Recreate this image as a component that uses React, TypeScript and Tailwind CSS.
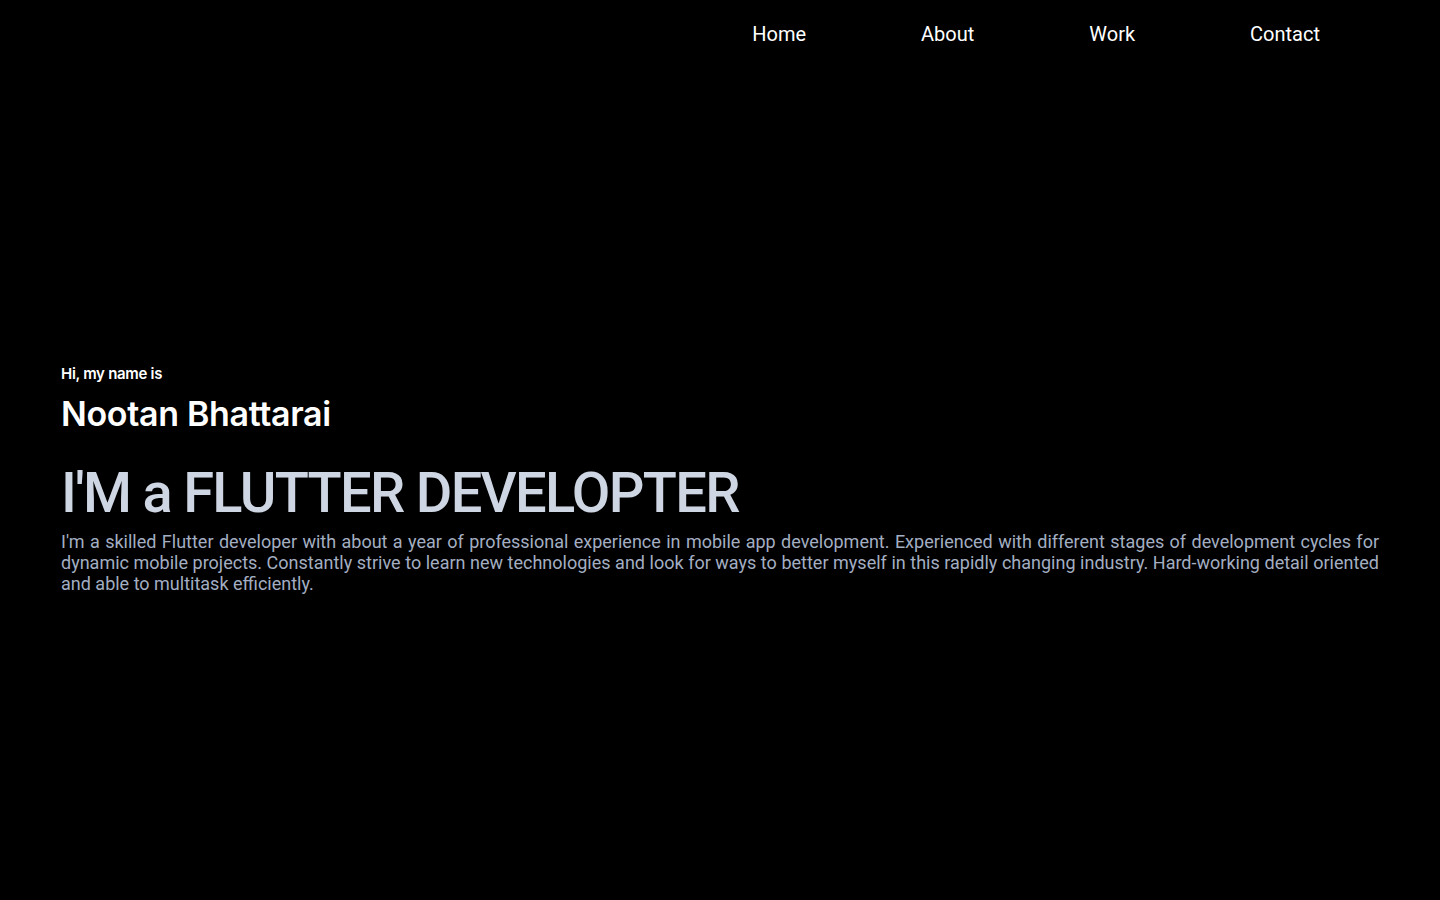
const NAV = ["Home", "About", "Work", "Contact"]

export default function App() {
  return (
    <div className="min-h-screen w-full bg-black text-white">
      <nav className="flex h-[68px] items-center justify-end gap-[115px] pr-[120px] font-['Roboto',sans-serif] text-[20px]">
        {NAV.map((item) => (
          <a key={item} href="#" className="text-white">
            {item}
          </a>
        ))}
      </nav>

      <section className="px-[61px] pt-[296px]">
        <p className="font-['Inter',sans-serif] text-[15px] leading-[20px] font-semibold tracking-[-0.02em]">
          Hi, my name is
        </p>
        <h1 className="mt-[10px] font-['Inter',sans-serif] text-[34px] leading-[40px] font-semibold tracking-[-0.01em]">
          Nootan Bhattarai
        </h1>
        <h2 className="mt-[29px] font-['Roboto',sans-serif] text-[56px] leading-[60px] font-medium tracking-[-0.03em] text-[#cfd6e3]">
          I'M a FLUTTER DEVELOPTER
        </h2>
        <p className="mt-[8px] text-justify font-['Roboto',sans-serif] text-[18px] leading-[21px] text-[#a3aec2]">
          I'm a skilled Flutter developer with about a year of professional experience in mobile app development.
          Experienced with different stages of development cycles for dynamic mobile projects. Constantly strive to
          learn new technologies and look for ways to better myself in this rapidly changing industry. Hard-working
          detail oriented and able to multitask efficiently.
        </p>
      </section>
    </div>
  )
}
